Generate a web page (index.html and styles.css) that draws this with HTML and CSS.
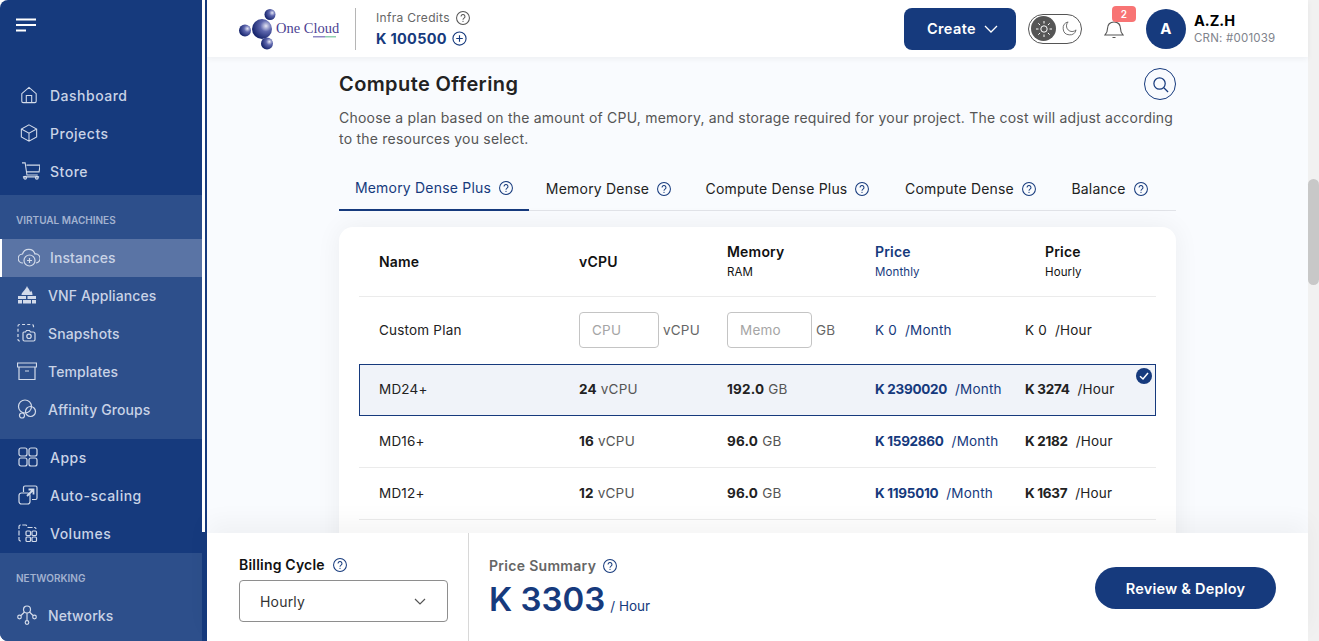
FILE: index.html
```html
<!DOCTYPE html>
<html lang="en">
    <head>
        <meta charset="UTF-8" />
        <meta name="viewport" content="width=device-width, initial-scale=1.0" />
        <title>Compute Offering</title>
        <link rel="stylesheet" href="styles.css">
    </head>
    <body>
        <svg class="defs" width="0" height="0">
            <symbol id="help" viewBox="0.5 0.5 15 15">
                <circle cx="8" cy="8" r="6.9" fill="none" stroke="currentColor" stroke-width="1.1" />
                <path d="M5.9 6.3a2.1 2.1 0 1 1 3.2 1.8c-.8.5-1.1.9-1.1 1.7" fill="none" stroke="currentColor" stroke-width="1.1" />
                <circle cx="8" cy="11.6" r=".7" fill="currentColor" />
            </symbol>
        </svg>

        <!-- Sidebar -->
        <aside class="sidebar">
            <nav class="side-nav">
                <div class="side-top">
                    <svg class="burger" width="20" height="14" viewBox="0 0 20 14"><path d="M0 1.5h20M0 7h20M0 12.5h10" stroke="#fff" stroke-width="2" /></svg>
                </div>
                <ul class="side-group first">
                    <li class="side-item">
                        <svg class="ico" viewBox="0 0 20 20"><path d="M2 8.5 10 1.5l8 7v8.5a1.5 1.5 0 0 1-1.5 1.500h-13A1.5 1.5 0 0 1 2 17zM7 18.500V10.500h6v8" /></svg>
                        Dashboard
                    </li>
                    <li class="side-item">
                        <svg class="ico" viewBox="0 0 20 20"><path d="M10 1 18.500 5.600v8.800L10 19l-8.500-4.600V5.600zM1.500 5.600 10 10.200l8.500-4.600M10 10.200V19" /></svg>
                        Projects
                    </li>
                    <li class="side-item store">
                        <svg class="ico" viewBox="0 0 20 20"><path d="M0 1h3.500l2 13.500h12M5 3.500h15l-1 7.500H5.500" /><path d="M1 16.500h18" /><circle cx="3.500" cy="17.500" r="1.500" /><circle cx="16.500" cy="17.500" r="1.500" /></svg>
                        Store
                    </li>
                </ul>
                <div class="side-section vm">
                    <p class="side-label">VIRTUAL MACHINES</p>
                    <ul class="side-list">
                        <li class="side-item active">
                            <svg class="ico wide" viewBox="0 0 22 20"><path d="M5 16a4.500 4.500 0 0 1-.500-9A6.500 6.500 0 0 1 17 7a4.500 4.500 0 0 1 1 9" /><circle cx="11.500" cy="13.500" r="5.500" /><path d="M11.500 11v5M9 13.500h5" /></svg>
                            Instances
                        </li>
                        <li class="side-item">
                            <svg class="ico solid" viewBox="0 0 20 20"><path d="M10 1c.5 2 3 3.500 3 6 .6-.3.9-.8 1-1.500 1 1.300 1.500 2.500 1.500 4.500H4.500C4.500 7 8 6 10 1zM1 11h8v3H1zM10.500 11H19v3h-8.500zM1 15h4v3.500H1zM6 15h8v3.500H6zM15 15h4v3.500h-4z" /></svg>
                            VNF Appliances
                        </li>
                        <li class="side-item">
                            <svg class="ico" viewBox="0 0 20 20"><path d="M3 18H2.500A1.500 1.500 0 0 1 1 16.500V3A1.500 1.500 0 0 1 2.500 1.500H15A1.500 1.500 0 0 1 16.500 3v3" stroke-dasharray="3 2.200" /><path d="M7 9h1.500l1-1.500h3l1 1.500H16a2 2 0 0 1 2 2v5.500a1.500 1.500 0 0 1-1.500 1.500h-9A1.500 1.500 0 0 1 6 16.500V10a1 1 0 0 1 1-1z" /><circle cx="12" cy="13.300" r="2.200" /></svg>
                            Snapshots
                        </li>
                        <li class="side-item">
                            <svg class="ico" viewBox="0 0 20 20"><path d="M.5 2h19v4H.5zM2 6v12.500h16V6M8 10h4" /></svg>
                            Templates
                        </li>
                        <li class="side-item">
                            <svg class="ico" viewBox="0 0 20 20"><circle cx="8" cy="7.500" r="6.500" /><circle cx="13.500" cy="12.500" r="5" /><circle cx="5" cy="16.500" r="2.500" /></svg>
                            Affinity Groups
                        </li>
                    </ul>
                </div>
                <ul class="side-group second">
                    <li class="side-item">
                        <svg class="ico" viewBox="0 0 20 20"><rect x="1" y="1" width="8" height="8" rx="2" /><rect x="11" y="1" width="8" height="8" rx="2" /><rect x="1" y="11" width="8" height="8" rx="2" /><rect x="11" y="11" width="8" height="8" rx="2" /></svg>
                        Apps
                    </li>
                    <li class="side-item">
                        <svg class="ico" viewBox="0 0 20 20"><path d="M5.500 7V2.500a1.500 1.500 0 0 1 1.500-1.500h10.500A1.500 1.500 0 0 1 19 2.500V13a1.500 1.500 0 0 1-1.500 1.500H14" /><rect x="1" y="8" width="11" height="11" rx="2.500" /><path d="M9 11l6-6M10.500 4.500H15.500V9.500" stroke-width="1.800" /></svg>
                        Auto-scaling
                    </li>
                    <li class="side-item">
                        <svg class="ico" viewBox="0 0 20 20"><path d="M3 18H2.500A1.500 1.500 0 0 1 1 16.500V3.500A1.500 1.500 0 0 1 2.500 2H8l2 2.500h6.500A1.500 1.500 0 0 1 18 6" stroke-dasharray="5 1.500" /><rect x="8" y="8" width="4.500" height="4.500" rx="1" /><rect x="14" y="8" width="4.500" height="4.500" rx="1" /><rect x="8" y="14" width="4.500" height="4.500" rx="1" /><rect x="14" y="14" width="4.500" height="4.500" rx="1" /></svg>
                        Volumes
                    </li>
                </ul>
                <div class="side-section net">
                    <p class="side-label">NETWORKING</p>
                    <ul class="side-list">
                        <li class="side-item">
                            <svg class="ico" viewBox="0 0 20 20"><circle cx="10" cy="4.500" r="3.500" /><circle cx="2.500" cy="12" r="1.800" /><circle cx="17.500" cy="12" r="1.800" /><circle cx="10" cy="17.500" r="1.800" /><path d="M7.500 7 4 10.500M12.500 7 16 10.500M10 8v7.700" /></svg>
                            Networks
                        </li>
                    </ul>
                </div>
            </nav>
            <div class="side-track"></div>
        </aside>

        <div class="main">
            <!-- Top bar -->
            <header class="topbar">
                <svg class="logo" width="100" height="50" viewBox="0 0 100 50">
                    <defs>
                        <radialGradient id="ball" cx="70%" cy="35%" r="70%">
                            <stop offset="0" stop-color="#e6e7f5" />
                            <stop offset=".4" stop-color="#5d66ad" />
                            <stop offset="1" stop-color="#16246c" />
                        </radialGradient>
                    </defs>
                    <circle cx="23" cy="25" r="10" fill="url(#ball)" />
                    <circle cx="31" cy="10.500" r="5.500" fill="url(#ball)" />
                    <circle cx="6" cy="26.500" r="6" fill="url(#ball)" />
                    <circle cx="28" cy="39.500" r="6" fill="url(#ball)" />
                    <text class="logo-text" x="37" y="29">One Cloud</text>
                    <rect x="74" y="32" width="12" height="1.500" fill="#8f88c4" />
                    <rect x="86" y="32" width="11" height="1.500" fill="#8fd0b0" />
                </svg>
                <div class="top-divider"></div>
                <div class="credits">
                    <div class="credits-label">Infra Credits <svg class="help" width="14" height="14"><use href="#help" /></svg></div>
                    <div class="credits-value">
                        K 100500
                        <svg width="15" height="15" viewBox="0 0 16 16"><circle cx="8" cy="8" r="7" fill="none" stroke="currentColor" stroke-width="1.200" /><path d="M8 4.500v7M4.500 8h7" stroke="currentColor" stroke-width="1.200" /></svg>
                    </div>
                </div>
                <button class="create-btn">
                    Create
                    <svg width="14" height="8" viewBox="0 0 14 8"><path d="M1 1l6 6 6-6" fill="none" stroke="#fff" stroke-width="1.300" /></svg>
                </button>
                <div class="toggle">
                    <span class="toggle-knob">
                        <svg width="16" height="16" viewBox="0 0 16 16"><circle cx="8" cy="8" r="3.200" fill="none" stroke="#fff" /><path d="M8 0v2.500M8 13.500V16M0 8h2.500M13.500 8H16M2.300 2.300l1.800 1.800M11.900 11.900l1.800 1.800M2.300 13.700l1.800-1.800M11.900 4.100l1.800-1.800" stroke="#fff" /></svg>
                    </span>
                    <svg width="15" height="15" viewBox="0 0 16 16"><path d="M6.500 1a7 7 0 1 0 8.500 8.500A6 6 0 0 1 6.500 1z" fill="none" stroke="#666" /></svg>
                </div>
                <div class="bell">
                    <svg width="20" height="20" viewBox="0 0 20 20"><path d="M1 16c1.500-1.500 2.500-3 2.500-6.500C3.500 5.500 6 3 10 3s6.500 2.500 6.500 6.500c0 3.500 1 5 2.500 6.500zM8.500 18.500h3" fill="none" stroke="#555" stroke-width="1.100" /></svg>
                    <span class="bell-badge">2</span>
                </div>
                <div class="avatar">A</div>
                <div class="user">
                    <div class="user-name">A.Z.H</div>
                    <div class="user-crn">CRN: #001039</div>
                </div>
            </header>

            <div class="content">
                <div class="title-row">
                    <h1>Compute Offering</h1>
                    <span class="search-btn">
                        <svg width="17" height="17" viewBox="0 0 18 18"><circle cx="8" cy="8" r="6" fill="none" stroke="currentColor" stroke-width="1.300" /><path d="M12.500 12.500 17 17" stroke="currentColor" stroke-width="1.300" /></svg>
                    </span>
                </div>
                <p class="desc">Choose a plan based on the amount of CPU, memory, and storage required for your project. The cost will adjust according to the resources you select.</p>

                <div class="tabs">
                    <div class="tab active">Memory Dense Plus <svg class="help" width="14" height="14"><use href="#help" /></svg></div>
                    <div class="tab">Memory Dense <svg class="help" width="14" height="14"><use href="#help" /></svg></div>
                    <div class="tab">Compute Dense Plus <svg class="help" width="14" height="14"><use href="#help" /></svg></div>
                    <div class="tab">Compute Dense <svg class="help" width="14" height="14"><use href="#help" /></svg></div>
                    <div class="tab">Balance <svg class="help" width="14" height="14"><use href="#help" /></svg></div>
                </div>

                <div class="plan-card">
                    <div class="plan-row plan-head">
                        <div class="head-name">Name</div>
                        <div class="head-name">vCPU</div>
                        <div class="head-name">Memory<small>RAM</small></div>
                        <div class="head-name blue">Price<small>Monthly</small></div>
                        <div class="head-name hourly">Price<small>Hourly</small></div>
                    </div>
                    <div class="plan-row custom">
                        <div>Custom Plan</div>
                        <div class="field"><input class="cpu-input" placeholder="CPU" /><span>vCPU</span></div>
                        <div class="field"><input class="mem-input" placeholder="Memo" /><span>GB</span></div>
                        <div class="blue">K 0<span class="per">/Month</span></div>
                        <div>K 0<span class="per">/Hour</span></div>
                    </div>
                    <div class="plan-row selected">
                        <div>MD24+</div>
                        <div><b>24</b> <span class="unit">vCPU</span></div>
                        <div><b>192.0</b> <span class="unit">GB</span></div>
                        <div class="blue"><b class="amount">K 2390020</b><span class="per">/Month</span></div>
                        <div><b class="amount">K 3274</b><span class="per">/Hour</span></div>
                        <svg class="check" width="16" height="16" viewBox="0 0 16 16"><circle cx="8" cy="8" r="8" fill="#163a7d" /><path d="M4 8.300 7 11l5-6" fill="none" stroke="#fff" stroke-width="1.500" /></svg>
                    </div>
                    <div class="plan-row">
                        <div>MD16+</div>
                        <div><b>16</b> <span class="unit">vCPU</span></div>
                        <div><b>96.0</b> <span class="unit">GB</span></div>
                        <div class="blue"><b class="amount">K 1592860</b><span class="per">/Month</span></div>
                        <div><b class="amount">K 2182</b><span class="per">/Hour</span></div>
                    </div>
                    <div class="plan-row">
                        <div>MD12+</div>
                        <div><b>12</b> <span class="unit">vCPU</span></div>
                        <div><b>96.0</b> <span class="unit">GB</span></div>
                        <div class="blue"><b class="amount">K 1195010</b><span class="per">/Month</span></div>
                        <div><b class="amount">K 1637</b><span class="per">/Hour</span></div>
                    </div>
                </div>
            </div>

            <!-- Bottom bar -->
            <footer class="summary">
                <div class="billing">
                    <div class="billing-label">Billing Cycle <svg class="help blue" width="14" height="14"><use href="#help" /></svg></div>
                    <div class="billing-select">
                        Hourly
                        <svg width="12" height="7" viewBox="0 0 12 7"><path d="M1 1l5 5 5-5" fill="none" stroke="#555" stroke-width="1.200" /></svg>
                    </div>
                </div>
                <div class="price">
                    <div class="price-label">Price Summary <svg class="help blue" width="14" height="14"><use href="#help" /></svg></div>
                    <div class="price-value">K 3303<span>/ Hour</span></div>
                </div>
                <button class="deploy-btn">Review &amp; Deploy</button>
            </footer>
        </div>

        <div class="page-scroll"><div class="page-thumb"></div></div>
    </body>
</html>
```

FILE: styles.css
```css
* {
    box-sizing: border-box;
}
body {
    display: flex;
    height: 641px;
    margin: 0;
    overflow: hidden;
    background-color: #fff;
    color: #111;
    font-family: Inter, "Open Sans", sans-serif;
    font-size: 14px;
    letter-spacing: 0.3px;
}
.defs {
    position: absolute;
}
ul {
    margin: 0;
    padding: 0;
    list-style: none;
}
svg {
    flex-shrink: 0;
}

/* sidebar */
.sidebar {
    display: flex;
    align-items: flex-start;
    width: 207px;
    flex-shrink: 0;
    overflow: hidden;
    background-color: #163a7d;
    border-radius: 8px 0 0 8px;
}
.side-nav {
    width: 202px;
    flex-shrink: 0;
}
.side-track {
    width: 3px;
    height: 532px;
    background-color: #fff;
}
.side-top {
    height: 77px;
    padding: 18px 0 0 16px;
}
.burger {
    display: block;
}
.side-group.first {
    height: 118px;
}
.side-item {
    display: flex;
    align-items: center;
    gap: 12px;
    height: 38px;
    padding: 0 0 2px 20px;
    color: #c9d3e6;
    font-weight: 500;
    font-size: 14px;
    letter-spacing: 0.5px;
}
.ico {
    width: 18px;
    height: 18px;
    fill: none;
    stroke: #d3dbea;
    stroke-width: 1.2;
}
.store .ico {
    margin-left: 2px;
    margin-right: -2px;
}
.side-group.second .side-item {
    padding-left: 18px;
}
.side-group.second .ico {
    width: 20px;
    height: 20px;
}
.side-section {
    background-color: #2d4f8b;
}
.side-section.vm {
    height: 244px;
}
.side-section.net {
    height: 88px;
}
.side-section .side-item {
    gap: 11px;
    padding-left: 17px;
    letter-spacing: 0.1px;
}
.side-section .ico {
    width: 20px;
    height: 20px;
}
.side-section .ico.wide {
    width: 22px;
    height: 20px;
}
.ico.solid {
    fill: #d3dbea;
    stroke: none;
}
.side-label {
    height: 44px;
    margin: 0;
    padding: 18px 0 0 16px;
    color: #a2b2d0;
    font-size: 10px;
    line-height: 14px;
    font-weight: 600;
    letter-spacing: 0;
}
.side-section .side-item.active {
    gap: 10px;
    background-color: #5a74a5;
    border-left: 2px solid #fff;
    padding-left: 16px;
}

/* top bar */
.main {
    display: flex;
    flex-direction: column;
    width: 1101px;
    flex-shrink: 0;
    background-color: #f9fbfe;
}
.topbar {
    display: flex;
    align-items: center;
    height: 57px;
    flex-shrink: 0;
    padding: 0 32px;
    background-color: #fff;
    box-shadow: 0 2px 6px rgba(0, 0, 0, 0.05);
    position: relative;
    z-index: 1;
}
.logo-text {
    font-family: "Liberation Serif", serif;
    font-size: 14.5px;
    letter-spacing: 0;
    fill: #4b3f92;
}
.top-divider {
    width: 1px;
    height: 42px;
    margin: 0 20px 0 16px;
    background-color: #b5b5b5;
}
.credits-label {
    display: flex;
    align-items: center;
    gap: 6px;
    color: #666;
    font-size: 12px;
}
.help {
    color: #555;
}
.help.blue {
    color: #163a7d;
}
.credits-value {
    display: flex;
    align-items: center;
    gap: 5px;
    margin-top: 5px;
    color: #163a7d;
    font-size: 14.5px;
    font-weight: 700;
}
.create-btn {
    display: flex;
    align-items: center;
    justify-content: center;
    gap: 8px;
    width: 112px;
    height: 42px;
    margin-left: auto;
    padding: 0 0 0 5px;
    border: none;
    border-radius: 8px;
    background-color: #163a7d;
    color: #fff;
    font-family: inherit;
    font-size: 14.5px;
    font-weight: 600;
    letter-spacing: 0.4px;
}
.toggle {
    display: flex;
    align-items: center;
    gap: 6px;
    width: 54px;
    height: 30px;
    margin-left: 12px;
    padding-left: 2px;
    border: 1px solid #555;
    border-radius: 15px;
}
.toggle-knob {
    display: flex;
    align-items: center;
    justify-content: center;
    width: 25px;
    height: 25px;
    border-radius: 50%;
    background-color: #555;
}
.bell {
    position: relative;
    width: 20px;
    height: 20px;
    margin: 0 22px;
}
.bell-badge {
    position: absolute;
    top: -13px;
    left: 8px;
    width: 24px;
    height: 16px;
    border-radius: 4px;
    background-color: #f87474;
    color: #fff;
    font-size: 10px;
    font-weight: 600;
    line-height: 16px;
    text-align: center;
}
.avatar {
    display: flex;
    align-items: center;
    justify-content: center;
    width: 40px;
    height: 40px;
    margin-right: 8px;
    border-radius: 50%;
    background-color: #163a7d;
    color: #fff;
    font-size: 15px;
    font-weight: 700;
}
.user {
    width: 82px;
    white-space: nowrap;
}
.user-name {
    color: #000;
    font-size: 14.5px;
    font-weight: 700;
    line-height: 18px;
    letter-spacing: 0;
}
.user-crn {
    color: #80838c;
    font-size: 11.5px;
    line-height: 16px;
    letter-spacing: 0.2px;
}

/* content */
.content {
    flex: 1;
    min-height: 0;
    overflow: hidden;
    padding: 11px 132px 0;
}
.title-row {
    display: flex;
    align-items: center;
    justify-content: space-between;
    height: 32px;
}
h1 {
    margin: 0;
    color: #222;
    font-size: 20px;
    font-weight: 600;
    letter-spacing: 0.4px;
}
.search-btn {
    display: flex;
    align-items: center;
    justify-content: center;
    width: 32px;
    height: 32px;
    border: 1px solid #163a7d;
    border-radius: 50%;
    color: #163a7d;
}
.desc {
    margin: 7px 0 0;
    color: #555;
    font-size: 14px;
    line-height: 21px;
    letter-spacing: 0.22px;
}
.tabs {
    display: flex;
    height: 42px;
    margin-top: 20px;
    border-bottom: 1px solid #e1e3e8;
}
.tab {
    display: flex;
    align-items: center;
    justify-content: center;
    gap: 8px;
    height: 42px;
    padding-bottom: 3px;
    color: #222;
    font-size: 14px;
    letter-spacing: 0.2px;
    white-space: nowrap;
}
.tab:nth-child(1) {
    width: 190px;
}
.tab:nth-child(2) {
    width: 159px;
}
.tab:nth-child(3) {
    width: 199px;
}
.tab:nth-child(4) {
    width: 167px;
}
.tab:nth-child(5) {
    width: 111px;
}
.tab .help {
    color: #163a7d;
}
.tab.active {
    border-bottom: 2px solid #163a7d;
    color: #163a7d;
}
.plan-card {
    margin-top: 16px;
    padding: 0 20px 60px;
    border-radius: 14px;
    background-color: #fff;
    box-shadow: 0 0 26px rgba(0, 0, 0, 0.06);
}
.plan-row {
    display: grid;
    grid-template-columns: 200px 148px 148px 150px 1fr;
    align-items: center;
    position: relative;
    height: 52px;
    padding: 0 0 2px 20px;
    border-bottom: 1px solid #ebebeb;
    color: #222;
    font-size: 13.5px;
    letter-spacing: 0.2px;
}
.plan-head {
    height: 70px;
    padding-bottom: 1px;
}
.head-name {
    color: #111;
    font-size: 14px;
    font-weight: 600;
}
.head-name small {
    display: block;
    margin-top: 5px;
    font-size: 11.5px;
    font-weight: 400;
    letter-spacing: 0.1px;
}
.head-name.hourly {
    margin-left: 20px;
}
.blue,
.head-name.blue {
    color: #163a7d;
}
.custom {
    height: 67px;
    border-bottom: none;
}
.field {
    display: flex;
    align-items: center;
    gap: 4px;
    color: #666;
}
input {
    height: 36px;
    padding: 0 12px;
    border: 1px solid #c4c4c4;
    border-radius: 4px;
    font-family: inherit;
    font-size: 13.5px;
    letter-spacing: inherit;
}
input::placeholder {
    color: #a5a5a5;
}
.cpu-input {
    width: 80px;
}
.mem-input {
    width: 85px;
}
.amount {
    letter-spacing: -0.3px;
}
.per {
    margin-left: 8px;
    font-weight: 400;
}
.unit {
    color: #555;
}
.selected {
    background-color: #f0f3f9;
    border-bottom: none;
    box-shadow: inset 0 0 0 1px #163a7d;
}
.check {
    position: absolute;
    top: 4px;
    right: 4px;
}

/* bottom bar */
.summary {
    display: flex;
    height: 108px;
    flex-shrink: 0;
    background-color: #fff;
    box-shadow: 0 -12px 22px rgba(0, 0, 0, 0.04);
    position: relative;
}
.billing {
    width: 262px;
    padding: 23px 0 0 32px;
    border-right: 1px solid #d8d8d8;
}
.billing-label {
    display: flex;
    align-items: center;
    gap: 8px;
    color: #111;
    font-size: 14px;
    font-weight: 600;
    line-height: 18px;
    letter-spacing: 0.2px;
}
.billing-select {
    display: flex;
    align-items: center;
    justify-content: space-between;
    width: 209px;
    height: 42px;
    margin-top: 6px;
    padding: 0 21px 0 20px;
    border: 1px solid #8e8e8e;
    border-radius: 4px;
    color: #333;
    letter-spacing: 0.2px;
}
.price {
    padding: 24px 0 0 20px;
}
.price-label {
    display: flex;
    align-items: center;
    gap: 7px;
    color: #666;
    font-size: 14px;
    font-weight: 600;
    line-height: 18px;
}
.price-value {
    display: flex;
    align-items: baseline;
    gap: 5px;
    color: #163a7d;
    font-size: 33px;
    font-weight: 600;
    line-height: 48px;
    letter-spacing: 0;
}
.price-value span {
    font-size: 13.5px;
    font-weight: 400;
}
.deploy-btn {
    width: 181px;
    height: 42px;
    margin: 34px 32px 0 auto;
    border: none;
    border-radius: 21px;
    background-color: #163a7d;
    color: #fff;
    font-family: inherit;
    font-size: 14.5px;
    font-weight: 600;
    letter-spacing: 0.2px;
}

/* page scrollbar */
.page-scroll {
    flex: 1;
    background-color: #f1f1f1;
}
.page-thumb {
    height: 106px;
    margin-top: 179px;
    border-radius: 6px;
    background-color: #c8c8c8;
}
```
